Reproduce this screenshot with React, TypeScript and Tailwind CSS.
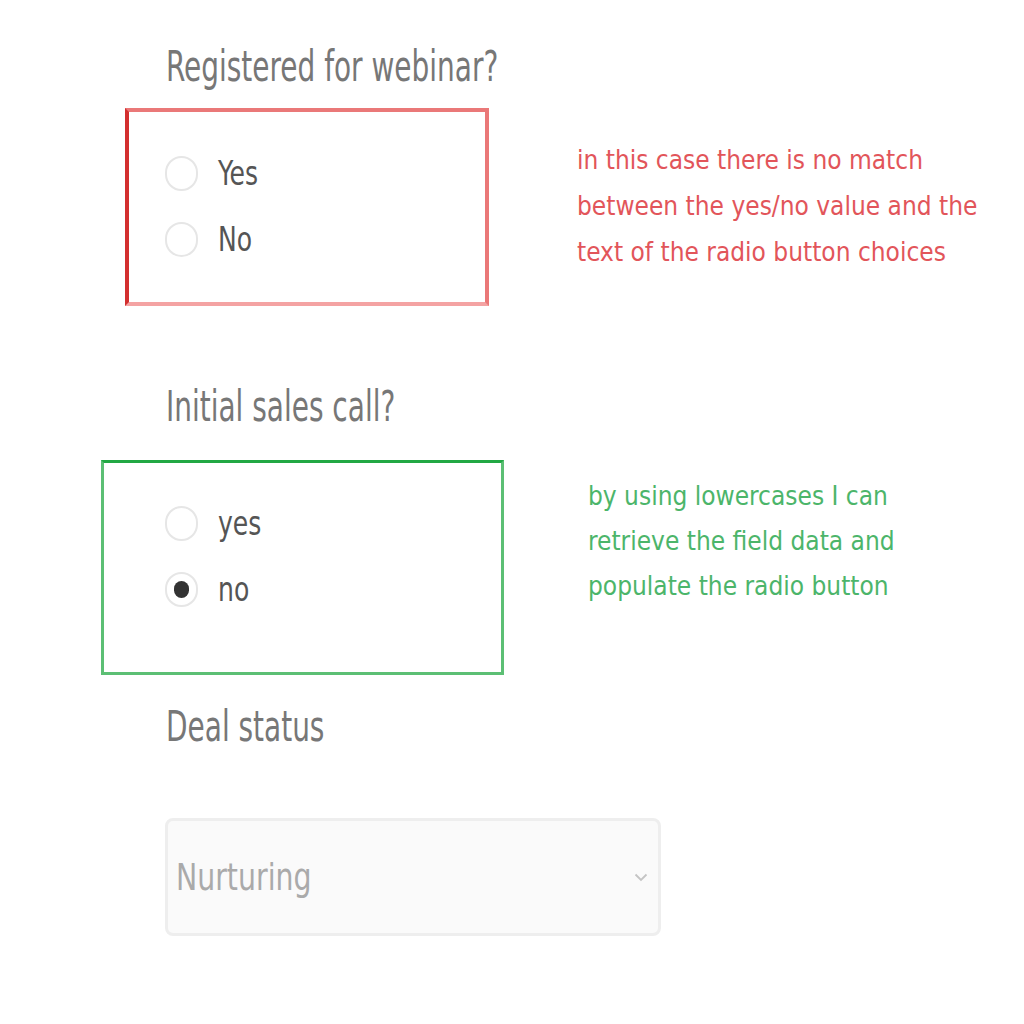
import React from "react";

const font = { fontFamily: '"DejaVu Sans Condensed", "Liberation Sans", sans-serif' };

function Radio({ checked, label }: { checked?: boolean; label: string }) {
  return (
    <div className="flex items-center h-[66px]">
      <div className="w-[33px] h-[35px] rounded-full border-2 border-[#e6e6e6] flex items-center justify-center">
        {checked && <div className="w-[15px] h-[17px] rounded-full bg-[#333]" />}
      </div>
      <span className="ml-[20px] inline-block origin-left scale-x-[0.82] text-[34px] leading-[40px] text-[#555]">{label}</span>
    </div>
  );
}

function Label({ children, className }: { children: React.ReactNode; className: string }) {
  return (
    <div className={className}>
      <span className="inline-block whitespace-nowrap origin-left scale-x-[0.74] text-[42px] leading-[50px] text-[#777]">{children}</span>
    </div>
  );
}

export default function App() {
  return (
    <div className="w-[1024px] h-[1024px] bg-white relative overflow-hidden" style={font}>
      <div className="flex flex-col pt-[42px]">
        <Label className="pl-[166px] h-[50px]">Registered for webinar?</Label>
        <div className="flex mt-[16px]">
          <div className="ml-[125px] w-[364px] h-[198px] border-[4px] border-[#ea7878] border-l-[#d32f2f] border-b-[#f4a3a3] pl-[36px] pt-[28px]">
            <Radio label="Yes" />
            <Radio label="No" />
          </div>
          <div className="ml-[88px] mt-[29px] text-[26px] leading-[46px] text-[#e2555a]">
            <div>in this case there is no match</div>
            <div>between the yes/no value and the</div>
            <div>text of the radio button choices</div>
          </div>
        </div>
        <Label className="pl-[166px] h-[50px] mt-[76px]">Initial sales call?</Label>
        <div className="flex mt-[28px]">
          <div className="ml-[101px] w-[403px] h-[215px] border-[3px] border-[#5cbf74] border-t-[#22a844] pl-[61px] pt-[27px]">
            <Radio label="yes" />
            <Radio checked label="no" />
          </div>
          <div className="ml-[84px] mt-[14px] text-[26px] leading-[45px] text-[#4cb56a]">
            <div>by using lowercases I can</div>
            <div>retrieve the field data and</div>
            <div>populate the radio button</div>
          </div>
        </div>
        <Label className="pl-[166px] h-[50px] mt-[27px]">Deal status</Label>
        <div className="ml-[165px] mt-[66px] w-[496px] h-[118px] rounded-[8px] border-[3px] border-[#eeeeee] bg-[#fafafa] flex items-center justify-between pl-[8px] pr-[10px]">
          <span className="inline-block origin-left scale-x-[0.83] text-[38px] text-[#aaa]">Nurturing</span>
          <svg width="14" height="9" viewBox="0 0 14 9" fill="none" stroke="#c4c4c4" strokeWidth="1.8">
            <path d="M1.5 1.5 L7 7 L12.5 1.5" />
          </svg>
        </div>
      </div>
    </div>
  );
}
